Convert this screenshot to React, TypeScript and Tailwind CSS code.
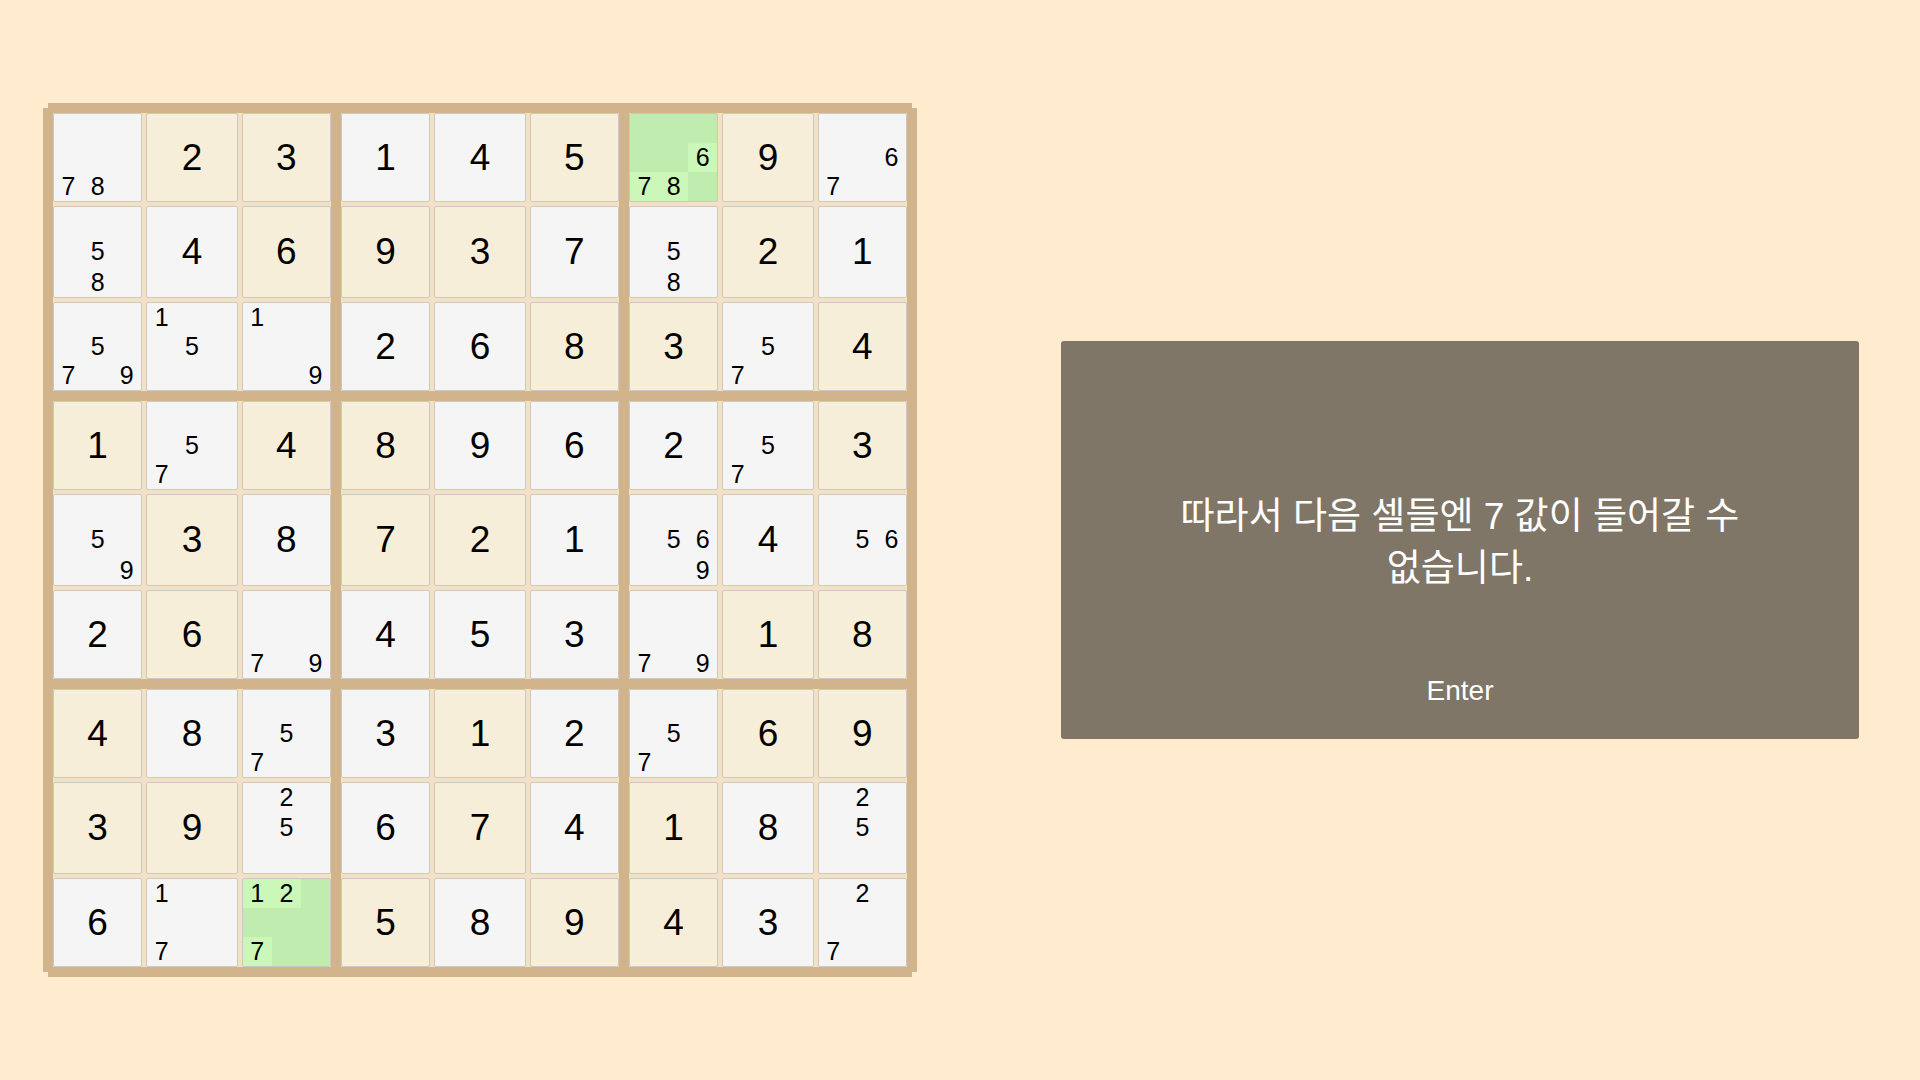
import React from "react";

// tokens: "5g" given, "5" filled, "c78" candidates, "h678" highlighted candidates (green cell)
const ROWS: string[][] = [
  ["c78", "2g", "3g", "1", "4", "5g", "h678", "9g", "c67"],
  ["c58", "4", "6g", "9g", "3g", "7", "c58", "2g", "1"],
  ["c579", "c15", "c19", "2", "6", "8g", "3g", "c57", "4g"],
  ["1g", "c57", "4g", "8g", "9", "6", "2", "c57", "3g"],
  ["c59", "3g", "8", "7g", "2g", "1", "c569", "4", "c56"],
  ["2", "6g", "c79", "4", "5", "3", "c79", "1g", "8g"],
  ["4g", "8", "c57", "3", "1g", "2", "c57", "6g", "9g"],
  ["3g", "9g", "c25", "6", "7g", "4", "1g", "8", "c25"],
  ["6", "c17", "h127", "5g", "8", "9g", "4g", "3", "c27"],
];

function Cell({ token }: { token: string }) {
  const kind = token[0];
  if (kind === "c" || kind === "h") {
    const nums = token.slice(1).split("").map(Number);
    const green = kind === "h";
    return (
      <div
        className={`rounded-[2px] border border-[#cdc8c0] ${green ? "bg-[#c0ecb0]" : "bg-[#f5f5f5]"} grid grid-cols-3 grid-rows-3 overflow-hidden`}
      >
        {[1, 2, 3, 4, 5, 6, 7, 8, 9].map((n) => {
          const on = nums.includes(n);
          return (
            <div
              key={n}
              className={`flex items-center justify-center text-[25px] leading-none text-black ${on && green ? "bg-[#cbf7b8]" : ""}`}
            >
              {on ? n : ""}
            </div>
          );
        })}
      </div>
    );
  }
  const given = token.endsWith("g");
  return (
    <div
      className={`rounded-[2px] border border-[#cdc8c0] ${given ? "bg-[#f6eed8]" : "bg-[#f5f5f5]"} flex items-center justify-center text-[37px] leading-none text-black`}
    >
      {token[0]}
    </div>
  );
}

function Box({ br, bc }: { br: number; bc: number }) {
  const cells: string[] = [];
  for (let r = 0; r < 3; r++) {
    for (let c = 0; c < 3; c++) cells.push(ROWS[br * 3 + r][bc * 3 + c]);
  }
  return (
    <div className="grid grid-cols-[89fr_92.6fr_89fr] grid-rows-[89fr_92.6fr_89fr] gap-[3.3px] bg-[#f3e1c5]">
      {cells.map((t, i) => (
        <Cell key={i} token={t} />
      ))}
    </div>
  );
}

function Board() {
  return (
    <div className="w-[874px] h-[874px] p-[10px] bg-[#d2b48c] [clip-path:polygon(5px_0,calc(100%_-_5px)_0,calc(100%_-_5px)_5px,100%_5px,100%_calc(100%_-_5px),calc(100%_-_5px)_calc(100%_-_5px),calc(100%_-_5px)_100%,5px_100%,5px_calc(100%_-_5px),0_calc(100%_-_5px),0_5px,5px_5px)]">
      <div className="w-[854px] h-[854px] grid grid-cols-3 grid-rows-3 gap-[10px]">
        {[0, 1, 2].map((br) =>
          [0, 1, 2].map((bc) => <Box key={`${br}-${bc}`} br={br} bc={bc} />)
        )}
      </div>
    </div>
  );
}

export default function App() {
  return (
    <div className="w-full h-screen bg-[#ffebcd] flex items-center font-['Liberation_Sans','Noto_Sans_CJK_KR',sans-serif]">
      <div className="w-[960px] flex justify-center">
        <Board />
      </div>
      <div className="ml-[101px] w-[798px] h-[398px] rounded-[3px] bg-[#7f7667] flex flex-col items-center px-20 pt-[150px] text-white">
        <p className="text-[37px] leading-[52px] text-center break-keep">
          따라서 다음 셀들엔 7 값이 들어갈 수 없습니다.
        </p>
        <button className="mt-[80px] text-[28px] leading-[32px] text-white">Enter</button>
      </div>
    </div>
  );
}
